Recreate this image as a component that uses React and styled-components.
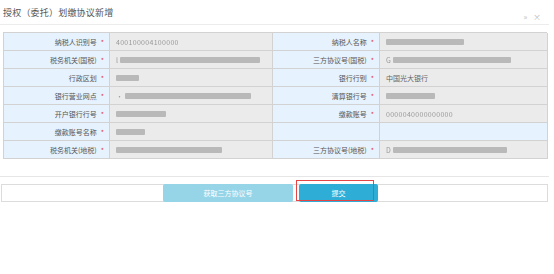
import React from "react";
import styled, { createGlobalStyle } from "styled-components";

const Global = createGlobalStyle`
    body {
        margin: 0;
        background: #fff;
        font-family: "Noto Sans CJK SC", "Liberation Sans", sans-serif;
    }
`;

const Page = styled.div`
    position: relative;
    width: 554px;
    height: 274px;
`;

const Header = styled.div`
    display: flex;
    align-items: center;
    justify-content: space-between;
    width: 549px;
    height: 25px;
    box-sizing: border-box;
    padding: 0 6px 0 3px;
    border-bottom: 1px solid #ececec;
`;

const Title = styled.div`
    font-size: 9px;
    color: #555;
    letter-spacing: 0.2px;
`;

const Tools = styled.div`
    font-size: 8px;
    color: #bbb;
    padding-top: 8px;
    letter-spacing: 2px;
`;

const Table = styled.div`
    display: grid;
    grid-template-columns: 106px 163px 107px 168px;
    grid-auto-rows: 18px;
    width: 544px;
    margin: 7px 0 0 3px;
    border-top: 1px solid #d2d2d2;
    border-left: 1px solid #d2d2d2;
    box-sizing: border-box;
`;

const Label = styled.div`
    display: flex;
    align-items: center;
    justify-content: flex-end;
    padding-right: 5px;
    background: #e6f2fd;
    border-right: 1px solid #d2d2d2;
    border-bottom: 1px solid #d2d2d2;
    font-size: 7px;
    color: #555;
`;

const Star = styled.span`
    color: #e04040;
    margin-left: 4px;
`;

const Value = styled.div`
    display: flex;
    align-items: center;
    padding-left: 6px;
    background: ${(p) => (p.$empty ? "#e6f2fd" : "#ebebeb")};
    border-right: 1px solid #d2d2d2;
    border-bottom: 1px solid #d2d2d2;
    font-size: 7px;
    color: #666;
`;

const Faded = styled.span`
    color: #9a9a9a;
    filter: blur(0.3px);
    letter-spacing: 0.3px;
`;

const Bar = styled.span`
    display: inline-block;
    height: 6px;
    width: ${(p) => p.$w}px;
    background: #b9b9b9;
    border-radius: 1px;
    margin-left: ${(p) => (p.$lead ? 2 : 0)}px;
    filter: blur(0.4px);
`;

const Divider = styled.div`
    width: 549px;
    margin-top: 17px;
    border-top: 1px solid #e6e6e6;
`;

const Footer = styled.div`
    display: flex;
    justify-content: center;
    gap: 6px;
    width: 547px;
    height: 18px;
    margin: 7px 0 0 1px;
    padding-right: 8px;
    box-sizing: border-box;
    border: 1px solid #dcdcdc;
`;

const Button = styled.div`
    display: flex;
    align-items: center;
    justify-content: center;
    width: ${(p) => p.$w}px;
    height: 18px;
    margin-top: -1px;
    border-radius: 2px;
    background: ${(p) => (p.$primary ? "#2eaed6" : "#96d4e8")};
    color: #fff;
    font-size: 7px;
`;

const Highlight = styled.div`
    position: absolute;
    left: 296px;
    top: 180px;
    width: 78px;
    height: 21px;
    border: 1px solid #e54545;
    box-sizing: border-box;
`;

const rows = [
    ["纳税人识别号", <Faded>400100004100000</Faded>, "纳税人名称", <Bar $w={78} />],
    ["税务机关(国税)", <><Faded>l</Faded><Bar $w={140} $lead /></>, "三方协议号(国税)", <><Faded>G</Faded><Bar $w={118} $lead /></>],
    ["行政区划", <Bar $w={23} />, "银行行别", "中国光大银行"],
    ["银行营业网点", <><Faded>·</Faded><Bar $w={126} $lead /></>, "清算银行号", <Bar $w={49} />],
    ["开户银行行号", <Bar $w={50} />, "缴款账号", <Faded>0000040000000000</Faded>],
    ["缴款账号名称", <Bar $w={29} />, null, null],
    ["税务机关(地税)", <Bar $w={106} />, "三方协议号(地税)", <><Faded>D</Faded><Bar $w={114} $lead /></>],
];

export default function App() {
    return (
        <Page>
            <Global />
            <Header>
                <Title>授权（委托）划缴协议新增</Title>
                <Tools>» ×</Tools>
            </Header>
            <Table>
                {rows.map(([l1, v1, l2, v2], i) => (
                    <React.Fragment key={i}>
                        <Label>
                            {l1}
                            <Star>*</Star>
                        </Label>
                        <Value>{v1}</Value>
                        <Label>
                            {l2}
                            {l2 && <Star>*</Star>}
                        </Label>
                        <Value $empty={!l2}>{v2}</Value>
                    </React.Fragment>
                ))}
            </Table>
            <Divider />
            <Footer>
                <Button $w={130}>获取三方协议号</Button>
                <Button $w={79} $primary>
                    提交
                </Button>
            </Footer>
            <Highlight />
        </Page>
    );
}
